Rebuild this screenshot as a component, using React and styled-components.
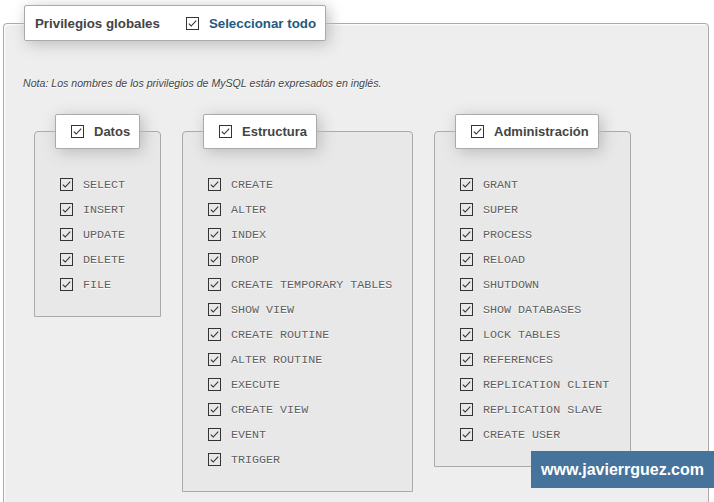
import React from 'react';
import styled, { createGlobalStyle } from 'styled-components';

const GlobalStyle = createGlobalStyle`
  html, body { margin: 0; padding: 0; background: #fff; }
  body {
    font-family: "Liberation Sans", Arial, sans-serif;
    color: #444;
    overflow: hidden;
  }
`;

const Page = styled.div`
  position: relative;
  width: 714px;
  height: 502px;
  padding: 5px 0 0 3px;
  box-sizing: border-box;
`;

const Panel = styled.fieldset`
  margin: 0;
  padding: 0 0 40px;
  width: 706px;
  box-sizing: border-box;
  min-inline-size: 0;
  border: 1px solid #aaa;
  border-radius: 4px 4px 0 0;
  background: #eee;
  box-shadow: 1px 1px 2px #fff inset;
  text-shadow: 0 1px 0 #fff;
`;

const Group = styled.fieldset`
  margin: 0;
  padding: 0 0 19px;
  width: ${(p) => p.$width}px;
  box-sizing: border-box;
  min-inline-size: 0;
  border: 1px solid #aaa;
  border-radius: 4px 4px 0 0;
  background: #e8e8e8;
  text-shadow: 0 1px 0 #fff;
`;

const Legend = styled.legend`
  margin-left: 20px;
  padding: ${(p) => (p.$main ? '0 9px 0 10px' : '0 9px 0 15px')};
  height: ${(p) => (p.$main ? 36 : 35)}px;
  box-sizing: border-box;
  background: #fff;
  border: 1px solid #aaa;
  border-radius: 2px;
  box-shadow: 3px 3px 15px #bbb;
  font-weight: bold;
  font-size: ${(p) => (p.$main ? 13.3 : 13)}px;
  color: #444;
  text-shadow: none;
`;

const LegendRow = styled.span`
  display: flex;
  align-items: center;
  height: 100%;
  white-space: nowrap;
`;

const Title = styled.span`
  margin-right: 26px;
`;

const LegendLabel = styled.span`
  margin-left: 10px;
  color: ${(p) => (p.$link ? '#235a81' : '#444')};
`;

const Body = styled.div`
  padding: 35px 0 0 19px;
`;

const Note = styled.p`
  margin: 0;
  font-size: 10.6px;
  line-height: 14px;
  font-style: italic;
  color: #444;
`;

const Groups = styled.div`
  display: flex;
  align-items: flex-start;
  gap: 21px;
  margin: 24px 0 0 11px;
`;

const List = styled.div`
  padding: 23px 0 0 25px;
`;

const Row = styled.div`
  display: flex;
  align-items: center;
  gap: 10px;
  height: 25px;
`;

const Priv = styled.span`
  font-family: "Liberation Mono", "Courier New", monospace;
  font-size: 11.7px;
  color: #5e5e5e;
  white-space: nowrap;
`;

const Box = styled.svg`
  flex: none;
  display: block;
  width: 13px;
  height: 13px;
`;

const Watermark = styled.div`
  position: absolute;
  right: 0;
  top: 451px;
  width: 183px;
  height: 37px;
  box-sizing: border-box;
  padding-left: 10px;
  display: flex;
  align-items: center;
  background: #46739b;
  color: #fff;
  font-weight: bold;
  font-size: 16px;
  text-shadow: none;
`;

const Check = () => (
  <Box viewBox="0 0 13 13">
    <rect x="0.5" y="0.5" width="12" height="12" fill="none" stroke="#333" />
    <polyline
      points="2.8,6.6 5.2,9 10.2,3.6"
      fill="none"
      stroke="#333"
      strokeWidth="1.1"
    />
  </Box>
);

const groups = [
  { name: 'Datos', width: 127, items: ['SELECT', 'INSERT', 'UPDATE', 'DELETE', 'FILE'] },
  {
    name: 'Estructura',
    width: 231,
    items: [
      'CREATE',
      'ALTER',
      'INDEX',
      'DROP',
      'CREATE TEMPORARY TABLES',
      'SHOW VIEW',
      'CREATE ROUTINE',
      'ALTER ROUTINE',
      'EXECUTE',
      'CREATE VIEW',
      'EVENT',
      'TRIGGER',
    ],
  },
  {
    name: 'Administración',
    width: 197,
    items: [
      'GRANT',
      'SUPER',
      'PROCESS',
      'RELOAD',
      'SHUTDOWN',
      'SHOW DATABASES',
      'LOCK TABLES',
      'REFERENCES',
      'REPLICATION CLIENT',
      'REPLICATION SLAVE',
      'CREATE USER',
    ],
  },
];

export default function App() {
  return (
    <Page>
      <GlobalStyle />
      <Panel>
        <Legend $main>
          <LegendRow>
            <Title>Privilegios globales</Title>
            <Check />
            <LegendLabel $link>Seleccionar todo</LegendLabel>
          </LegendRow>
        </Legend>
        <Body>
          <Note>
            Nota: Los nombres de los privilegios de MySQL están expresados en inglés.
          </Note>
          <Groups>
            {groups.map((g) => (
              <Group key={g.name} $width={g.width}>
                <Legend>
                  <LegendRow>
                    <Check />
                    <LegendLabel>{g.name}</LegendLabel>
                  </LegendRow>
                </Legend>
                <List>
                  {g.items.map((it) => (
                    <Row key={it}>
                      <Check />
                      <Priv>{it}</Priv>
                    </Row>
                  ))}
                </List>
              </Group>
            ))}
          </Groups>
        </Body>
      </Panel>
      <Watermark>www.javierrguez.com</Watermark>
    </Page>
  );
}
